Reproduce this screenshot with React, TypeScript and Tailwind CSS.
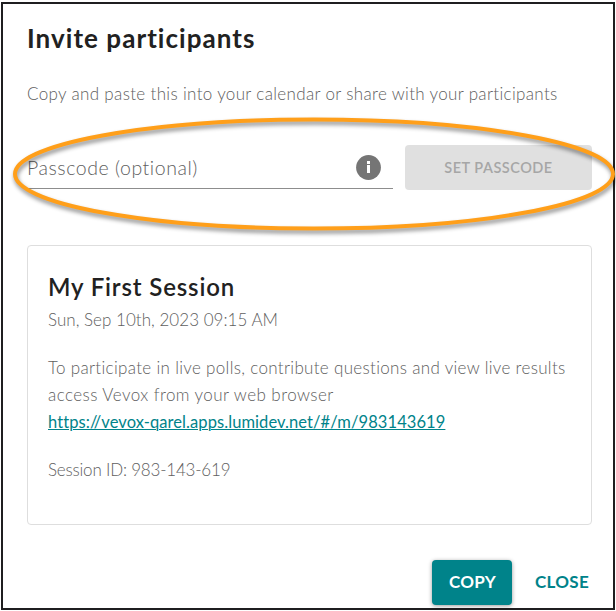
export default function App() {
  return (
    <div className="h-[611px] w-[616px] overflow-hidden bg-white pl-px pt-[2px] font-['Lato','Liberation_Sans',sans-serif] text-[#606060]">
      <main className="relative flex h-[608px] w-[614px] flex-col border-2 border-[#1f1e20] pl-[24px] pr-[21px]">
        <h1 className="mt-[18px] h-[32px] whitespace-nowrap text-[26px] font-bold leading-[32px] tracking-[1.05px] text-[#212121]">
          <span>Invite participants</span>
        </h1>
        <p className="mt-[28px] h-[24px] whitespace-nowrap text-[17px] font-light leading-[24px] tracking-[0.34px]">
          <span>Copy and paste this into your calendar or share with your participants</span>
        </p>

        <div className="mt-[39px] flex h-[45px] gap-[12px]">
          <label className="flex h-[44px] w-[366px] items-center justify-between border-b border-[#8d8d8d] pr-[12px] pt-[2px]">
            <span className="whitespace-nowrap text-[19.5px] font-light leading-[24px] tracking-[0.55px]">Passcode (optional)</span>
            <svg className="h-[25px] w-[25px]" viewBox="0 0 25 25" aria-hidden="true">
              <circle cx="12.5" cy="12.5" r="12.4" fill="#757575" />
              <path d="M11 6h3v3h-3zM11 10h3v8h-3z" fill="#fff" />
            </svg>
          </label>
          <button className="h-[45px] w-[187px] rounded-[4px] bg-[#e0e0e0] pt-px text-[14.5px] font-semibold tracking-[0.5px] text-[#a6a6a6]">
            <span>SET PASSCODE</span>
          </button>
        </div>

        <section className="mt-[55px] flex h-[280px] flex-col whitespace-nowrap rounded-[4px] border border-[#dedede] pl-[20px] text-[17px] font-light leading-[28px]">
          <h2 className="mt-[25px] h-[32px] text-[24px] font-semibold leading-[32px] tracking-[0.85px] text-[#212121]">
            <span>My First Session</span>
          </h2>
          <p className="mt-[3px] tracking-[0.03px]"><span>Sun, Sep 10th, 2023 09:15 AM</span></p>
          <p className="mt-[20px] tracking-[0.32px]"><span>To participate in live polls, contribute questions and view live results</span></p>
          <p className="-mt-px tracking-[0.44px]"><span>access Vevox from your web browser</span></p>
          <a className="-mt-px self-start text-[16.5px] font-normal tracking-[0.08px] text-[#00838a] underline decoration-1">https://vevox-qarel.apps.lumidev.net/#/m/983143619</a>
          <p className="mt-[20px] tracking-[-0.2px]"><span>Session ID: 983-143-619</span></p>
        </section>

        <footer className="mt-[35px] flex h-[45px] justify-end text-[17px] font-bold">
          <button className="h-[45px] w-[80px] rounded-[4px] bg-[#00838a] pb-px pl-px tracking-[0.3px] text-white shadow-[0_1px_4px_rgba(0,0,0,0.4)]">
            <span>COPY</span>
          </button>
          <button className="w-[80px] pb-px pl-[23px] text-left tracking-[0.3px] text-[#00838a]"><span>CLOSE</span></button>
        </footer>

        <svg className="pointer-events-none absolute left-[-3px] top-[-4px] h-[611px] w-[616px]" viewBox="0 0 616 611" aria-hidden="true">
          <ellipse
            cx="314" cy="174" rx="299" ry="54.5" fill="none" stroke="#ff9f1a" strokeWidth="4"
            className="[filter:drop-shadow(1px_3px_2px_rgba(0,0,0,0.45))]"
          />
        </svg>
      </main>
    </div>
  );
}
